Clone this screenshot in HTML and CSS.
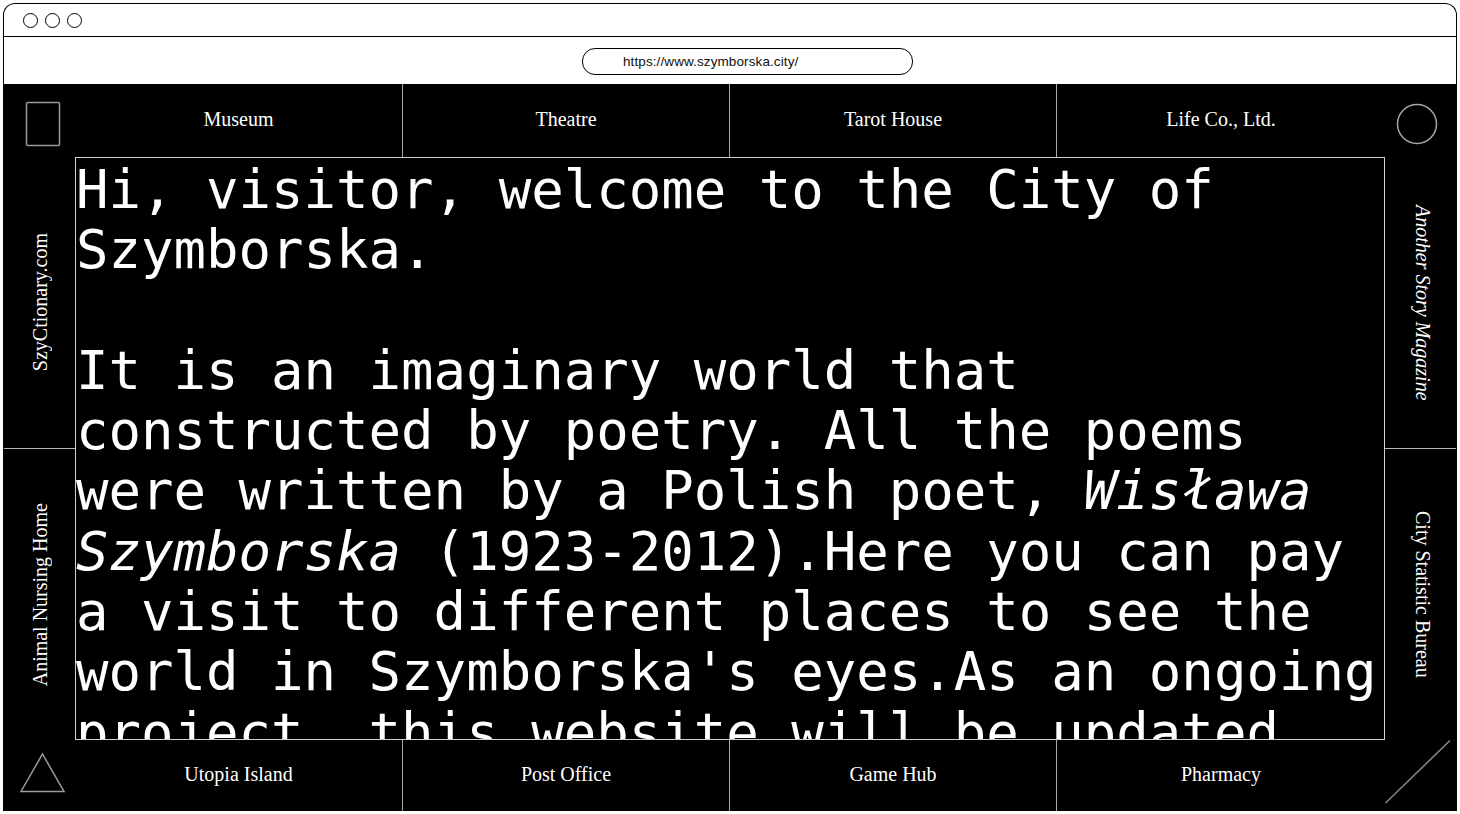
FILE: index.html
```html
<!DOCTYPE html>
<html lang="en">
<head>
<meta charset="utf-8">
<title>City of Szymborska</title>
<link rel="stylesheet" href="styles.css">
</head>
<body>
<div class="frame">
  <div class="titlebar">
    <span class="dot"></span><span class="dot"></span><span class="dot"></span>
  </div>
  <div class="urlbar">
    <div class="url">https://www.szymborska.city/</div>
  </div>
  <div class="city">
    <div class="corner">
      <svg viewBox="0 0 71 73" width="71" height="73"><rect x="22.5" y="18.5" width="33" height="43" rx="1" fill="none" stroke="#9a9a9a" stroke-width="1.5"/></svg>
    </div>
    <nav class="nav">
      <a class="nav-cell">Museum</a>
      <a class="nav-cell">Theatre</a>
      <a class="nav-cell">Tarot House</a>
      <a class="nav-cell">Life Co., Ltd.</a>
    </nav>
    <div class="corner">
      <svg viewBox="0 0 71 73" width="71" height="73"><circle cx="32" cy="40" r="19.5" fill="none" stroke="#a8a8a8" stroke-width="1.5"/></svg>
    </div>

    <div class="side side-left">
      <a class="side-cell"><span class="vtext up">SzyCtionary.com</span></a>
      <a class="side-cell split"><span class="vtext up">Animal Nursing Home</span></a>
    </div>
    <main class="content">
      <p>Hi, visitor, welcome to the City of Szymborska.</p>
      <p class="gap">It is an imaginary world that constructed by poetry. All the poems were written by a Polish poet, <em>Wisława Szymborska</em> (1923-2012).Here you can pay a visit to different places to see the world in Szymborska's eyes.As an ongoing project, this website will be updated continuously.</p>
    </main>
    <div class="side side-right">
      <a class="side-cell"><span class="vtext down italic">Another Story Magazine</span></a>
      <a class="side-cell split"><span class="vtext down">City Statistic Bureau</span></a>
    </div>

    <div class="corner">
      <svg viewBox="0 0 71 71" width="71" height="71"><polygon points="17,51.5 60,51.5 38.5,14" fill="none" stroke="#9a9a9a" stroke-width="1.5"/></svg>
    </div>
    <nav class="nav">
      <a class="nav-cell">Utopia Island</a>
      <a class="nav-cell">Post Office</a>
      <a class="nav-cell">Game Hub</a>
      <a class="nav-cell">Pharmacy</a>
    </nav>
    <div class="corner">
      <svg viewBox="0 0 71 71" width="71" height="71"><line x1="0.5" y1="63" x2="65" y2="0.5" stroke="#8a8a8a" stroke-width="1.5"/></svg>
    </div>
  </div>
</div>
</body>
</html>
```
FILE: styles.css
```css
* { box-sizing: border-box; }

html, body {
  margin: 0;
  padding: 0;
  background: #ffffff;
}

body {
  padding: 3px 3px 0 3px;
  font-family: "Liberation Serif", serif;
}

.frame {
  width: 1454px;
  border: 1px solid #000;
  border-bottom: none;
  border-radius: 12px 12px 0 0;
  overflow: hidden;
  background: #fff;
}

.titlebar {
  height: 33px;
  border-bottom: 1px solid #000;
  display: flex;
  align-items: center;
  gap: 7px;
  padding-left: 19px;
}

.dot {
  width: 15px;
  height: 15px;
  border: 1.3px solid #000;
  border-radius: 50%;
}

.urlbar {
  height: 47px;
  padding-top: 11px;
  padding-left: 578px;
}

.url {
  width: 331px;
  height: 27px;
  border: 1px solid #000;
  border-radius: 13px;
  padding-left: 40px;
  display: flex;
  align-items: center;
  font-family: "Liberation Sans", Arial, sans-serif;
  font-size: 13.5px;
  color: #111;
  letter-spacing: 0.1px;
}

.city {
  background: #000;
  color: #fff;
  display: grid;
  grid-template-columns: 71px 1310px 71px;
  grid-template-rows: 73px 583px 71px;
}

.corner {
  display: block;
  overflow: hidden;
}

.corner svg { display: block; }

.nav {
  display: grid;
  grid-template-columns: 327px 327px 327px 1fr;
}

.nav-cell {
  display: flex;
  align-items: center;
  justify-content: center;
  font-size: 20px;
  color: #fff;
  padding-bottom: 2px;
}

.nav-cell + .nav-cell {
  border-left: 1px solid #a9a9a9;
}

.side {
  display: grid;
  grid-template-rows: 291px 292px;
}

.side-cell {
  display: flex;
  align-items: center;
  justify-content: center;
  color: #fff;
  font-size: 20px;
}

.side-cell.split {
  border-top: 1px solid #b5b5b5;
}

.side-left .side-cell { padding-left: 1px; }
.side-right .side-cell { padding-left: 4px; }

.vtext {
  writing-mode: vertical-rl;
  white-space: nowrap;
}

.vtext.up { transform: rotate(180deg); }

.italic { font-style: italic; }

.content {
  border: 1px solid #d0d0d0;
  overflow: hidden;
  padding: 2px 0 0 0;
  font-family: "DejaVu Sans Mono", "Liberation Mono", monospace;
  font-size: 54px;
  line-height: 60.3px;
  color: #fff;
}

.content p {
  margin: 0;
}

.content p.gap {
  margin-top: 60.3px;
}

.content em {
  font-style: italic;
}
```
